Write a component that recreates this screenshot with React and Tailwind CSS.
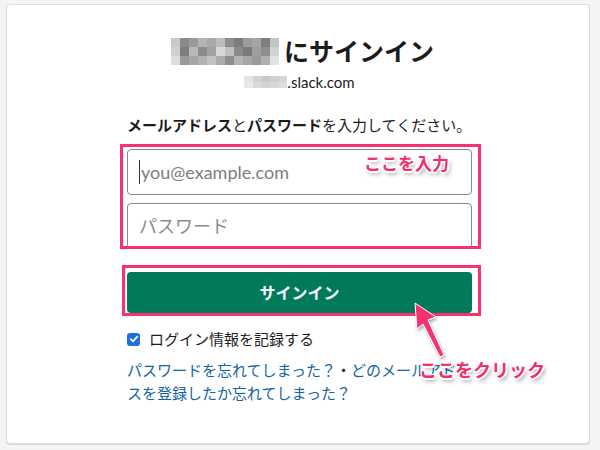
import React from "react";

const titleMosaic = [
  ["#c9c9c9", "#8a8a8a", "#9a9a9a", "#b5b5b5", "#a8a8a8", "#bdbdbd", "#8e8e8e", "#7c7c7c", "#9c9c9c", "#a5a5a5", "#7e7e7e", "#c4c4c4"],
  ["#d0d0d0", "#7d7d7d", "#b9b9b9", "#8c8c8c", "#a2a2a2", "#d8d8d8", "#c0c0c0", "#8a8a8a", "#7a7a7a", "#9d9d9d", "#8e8e8e", "#d2d2d2"],
  ["#dedede", "#9a9a9a", "#a6a6a6", "#b1b1b1", "#c2c2c2", "#acacac", "#8f8f8f", "#b4b4b4", "#a6a6a6", "#9a9a9a", "#b0b0b0", "#e2e2e2"],
];

const subMosaic = [
  ["#e4e4e4", "#d2d2d2", "#c9c9c9", "#cfcfcf", "#d6d6d6"],
  ["#e8e8e8", "#dadada", "#d4d4d4", "#d8d8d8", "#dedede"],
];

function Mosaic({ grid, cell, cellH }) {
  return (
    <div className="flex flex-col">
      {grid.map((row, i) => (
        <div key={i} className="flex">
          {row.map((c, j) => (
            <div key={j} style={{ background: c, width: cell, height: cellH ?? cell }} />
          ))}
        </div>
      ))}
    </div>
  );
}

const annot =
  "[text-shadow:1px_1px_0_#fff,-1px_-1px_0_#fff,1px_-1px_0_#fff,-1px_1px_0_#fff,0_2px_0_#fff,2px_0_0_#fff,2px_3px_4px_rgba(0,0,0,0.45)]";

export default function App() {
  return (
    <div
      className="relative w-[600px] h-[450px] overflow-hidden bg-[#f4f4f4] pt-[4px] pl-[6px]"
      style={{ fontFamily: 'Lato, "Noto Sans CJK JP", sans-serif' }}
    >
      <div className="w-[584px] h-[440px] bg-white border border-[#dcdcdc] rounded-[4px] shadow-[0_1px_1px_rgba(0,0,0,0.12)] flex flex-col items-center">
        <div className="w-[345px] flex flex-col ml-[3px]">
          {/* title */}
          <div className="mt-[30px] flex items-center justify-center gap-[5px] h-[32px] ml-[6px]">
            <Mosaic grid={titleMosaic} cell={9} />
            <span className="text-[25px] leading-[32px] font-bold text-[#1d1c1d]">にサインイン</span>
          </div>
          <div className="mt-[5px] h-[20px] flex items-center justify-center text-[15px] text-[#1d1c1d]">
            <Mosaic grid={subMosaic} cell={8.6} cellH={6} />
            <span>.slack.com</span>
          </div>
          <div className="mt-[22px] h-[22px] leading-[22px] text-[15px] text-[#1d1c1d] whitespace-nowrap">
            <b>メールアドレス</b>と<b>パスワード</b>を入力してください。
          </div>
          {/* inputs */}
          <div className="mt-[13px] h-[46px] rounded-[4px] border border-[#8b8b8b] flex items-center pl-[11px] text-[18px] text-[#7d7d7d]">
            <span className="w-px h-[24px] bg-[#333] mr-[1px]" />
            <span>you@example.com</span>
          </div>
          <div className="mt-[8px] h-[46px] rounded-[4px] border border-[#8b8b8b] flex items-center pl-[11px] text-[18px] text-[#8a8a8a]">
            パスワード
          </div>
          {/* button */}
          <div className="mt-[23px] h-[41px] rounded-[4px] bg-[#007a5a] flex items-center justify-center text-white text-[16px] font-bold">
            サインイン
          </div>
          {/* checkbox */}
          <div className="mt-[16px] h-[20px] flex items-center gap-[9px] text-[15px] text-[#1d1c1d]">
            <div className="w-[13px] h-[13px] rounded-[3px] bg-[#1a6fe3] flex items-center justify-center">
              <svg width="10" height="10" viewBox="0 0 10 10">
                <path d="M1.8 5.2 L4 7.3 L8.3 2.6" stroke="white" strokeWidth="1.8" fill="none" strokeLinecap="round" strokeLinejoin="round" />
              </svg>
            </div>
            <span>ログイン情報を記録する</span>
          </div>
          {/* links */}
          <div className="mt-[10px] text-[15px] leading-[23px] text-[#1264a3]">
            パスワードを忘れてしまった？<span className="text-[#1d1c1d]">・</span>どのメールアドレスを登録したか忘れてしまった？
          </div>
        </div>
      </div>

      {/* annotation overlays */}
      <div className="absolute left-[120px] top-[144px] w-[361px] h-[105px] border-[3px] border-[#f7336f]" />
      <div className="absolute left-[122px] top-[265px] w-[359px] h-[51px] border-[3px] border-[#f7336f]" />
      <div className={`absolute left-[364px] top-[152px] text-[17px] leading-[24px] font-bold text-[#f0306b] ${annot}`}>
        ここを入力
      </div>
      <svg className="absolute left-0 top-0" width="600" height="450" viewBox="0 0 600 450">
        <defs>
          <filter id="sh" x="-50%" y="-50%" width="200%" height="200%">
            <feDropShadow dx="1" dy="2" stdDeviation="1.5" floodColor="#000" floodOpacity="0.35" />
          </filter>
        </defs>
        <polygon
          points="415,303 436,317 428,320 444,355 440,357 423,324 417,329"
          fill="#f7336f"
          stroke="#fff"
          strokeWidth="1"
          filter="url(#sh)"
        />
      </svg>
      <div className={`absolute left-[419px] top-[357px] text-[18px] leading-[26px] font-bold text-[#f0306b] ${annot}`}>
        ここをクリック
      </div>
    </div>
  );
}
